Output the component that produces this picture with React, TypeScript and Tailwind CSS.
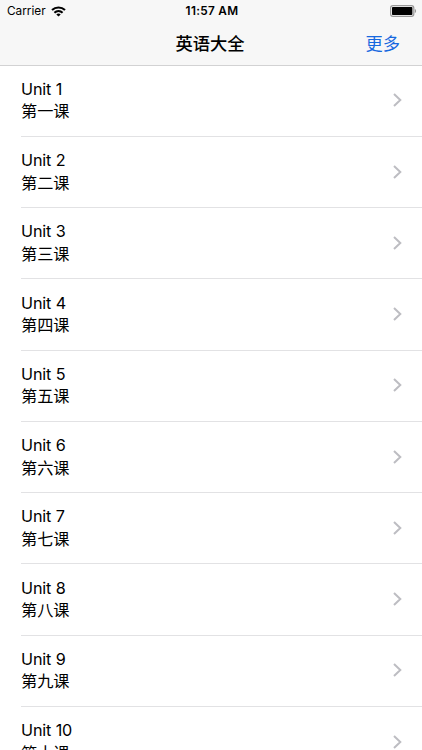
import React from 'react';

const numerals = ['一', '二', '三', '四', '五', '六', '七', '八', '九', '十'];

const units = numerals.map((numeral, index) => ({
  id: index + 1,
  title: `Unit ${index + 1}`,
  subtitle: `第${numeral}课`,
}));

const WifiIcon: React.FC = () => (
  <svg width="15" height="11" viewBox="0 0 15 11" fill="none" stroke="#000" strokeWidth="2.1">
    <path d="M1 4.1C4.7 0.6 10.3 0.6 14 4.1" />
    <path d="M3.4 6.7C5.7 4.6 9.3 4.6 11.6 6.7" />
    <path d="M7.5 10.6L5.3 8.4C6.5 7.3 8.5 7.3 9.7 8.4Z" fill="#000" stroke="none" />
  </svg>
);

const BatteryIcon: React.FC = () => (
  <svg width="27" height="12" viewBox="0 0 27 12">
    <rect x="0.6" y="0.6" width="23.2" height="10.8" rx="2.4" fill="none" stroke="#999" strokeWidth="1.2" />
    <rect x="2" y="2" width="20.4" height="8" rx="0.8" fill="#000" />
    <path d="M24.8 4C26.5 4.5 26.5 7.5 24.8 8Z" fill="#999" />
  </svg>
);

const Chevron: React.FC = () => (
  <svg width="9" height="14" viewBox="0 0 9 14" fill="none" stroke="#bdbdc2" strokeWidth="2">
    <path d="M1 1L7.3 7L1 13" />
  </svg>
);

export default function App() {
  return (
    <div className="flex h-[750px] w-[422px] flex-col overflow-hidden bg-white font-['Inter','Noto_Sans_CJK_SC',sans-serif] text-black">
      {/* Header */}
      <header className="h-[65.7px] shrink-0 border-b border-[#d2d2d3] bg-[#f7f7f7]">
        <div className="grid h-[22px] grid-cols-3 items-center pr-[5px] pl-[7px]">
          <div className="flex items-center gap-[5px]">
            <span className="pt-px text-[11.8px]">Carrier</span>
            <WifiIcon />
          </div>
          <span className="pt-px text-center text-[11.8px] font-semibold tracking-[0.3px]">11:57 AM</span>
          <div className="flex justify-end">
            <BatteryIcon />
          </div>
        </div>
        <div className="grid h-[43px] grid-cols-3 items-center pr-[22px] pl-5">
          <h1 className="col-start-2 text-center text-[17.3px] font-medium">英语大全</h1>
          <button className="text-right text-[17.3px] text-[#1769df]">更多</button>
        </div>
      </header>

      {/* Unit list */}
      <ul className="pl-[21px]">
        {units.map((unit) => (
          <li
            key={unit.id}
            className="flex h-[71.25px] items-center justify-between border-b border-[#e2e2e4] pr-[20px] pb-px"
          >
            <div className="text-[16.2px] leading-[22.5px] font-normal tracking-[-0.15px]">
              <p>{unit.title}</p>
              <p className="tracking-normal">{unit.subtitle}</p>
            </div>
            <Chevron />
          </li>
        ))}
      </ul>
    </div>
  );
}
